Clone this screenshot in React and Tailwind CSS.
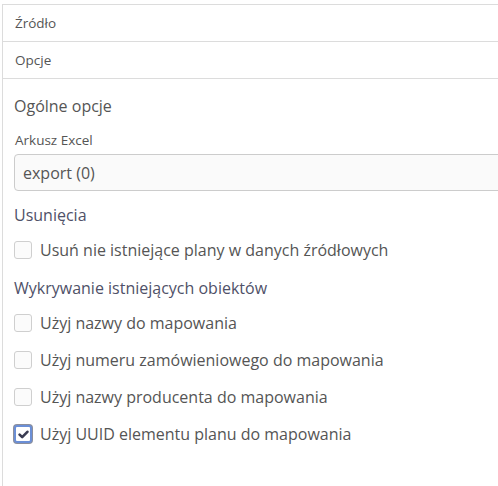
import React from "react";

function Box({ checked }) {
  if (checked) {
    return (
      <span className="flex h-[18px] w-[18px] shrink-0 items-center justify-center rounded-[3px] border-2 border-[#6b8fd6] bg-white ring-1 ring-[#8c8f9c]">
        <svg width="11" height="9" viewBox="0 0 11 9">
          <path d="M1.6 4.6 L4.2 7.2 L9.4 1.8" fill="none" stroke="#3a3c52" strokeWidth="2.6" strokeLinecap="round" strokeLinejoin="round" />
        </svg>
      </span>
    );
  }
  return <span className="block h-[18px] w-[18px] shrink-0 rounded-[3px] border border-[#cfcfcf] bg-[#fbfbfb]" />;
}

function Check({ label, checked, className }) {
  return (
    <div className={"flex h-[22px] items-center gap-[8px] " + className}>
      <Box checked={checked} />
      <span className="text-[16px] leading-[22px] text-[#555]">{label}</span>
    </div>
  );
}

export default function App() {
  return (
    <div className="h-[486px] w-[498px] overflow-hidden bg-white pl-[2px] pt-[4px]" style={{ fontFamily: "'Open Sans', sans-serif" }}>
      <div className="h-[490px] w-[540px] border-l border-t border-[#dcdcdc]">
        <div className="flex h-[37px] items-center border-b border-[#dcdcdc] pl-[12px] text-[13.5px] text-[#555]">Źródło</div>
        <div className="flex h-[37px] items-center border-b border-[#dcdcdc] pl-[12px] text-[13.5px] text-[#555]">Opcje</div>
        <div className="flex flex-col pl-[11px] pt-[16px]">
          <div className="h-[22px] text-[16px] leading-[22px] text-[#555]">Ogólne opcje</div>
          <div className="mt-[14px] h-[18px] pl-[1px] text-[13.5px] leading-[18px] text-[#555]">Arkusz Excel</div>
          <div className="mt-[5px] flex h-[37px] items-center rounded-l-[4px] border border-[#cccccc] bg-[#fafafa] pl-[8px] text-[16px] text-[#555]">export (0)</div>
          <div className="mt-[13px] h-[22px] text-[16px] leading-[22px] text-[#4f5168]">Usunięcia</div>
          <Check className="mt-[13px]" label="Usuń nie istniejące plany w danych źródłowych" />
          <div className="mt-[16px] h-[22px] text-[16px] leading-[22px] text-[#4f5168]">Wykrywanie istniejących obiektów</div>
          <Check className="mt-[13px]" label="Użyj nazwy do mapowania" />
          <Check className="mt-[15px]" label="Użyj numeru zamówieniowego do mapowania" />
          <Check className="mt-[15px]" label="Użyj nazwy producenta do mapowania" />
          <Check className="mt-[15px]" label="Użyj UUID elementu planu do mapowania" checked />
        </div>
      </div>
    </div>
  );
}
